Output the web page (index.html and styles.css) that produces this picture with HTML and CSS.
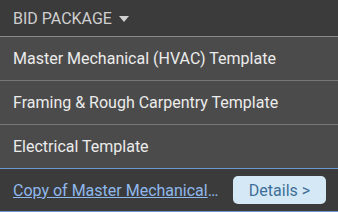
FILE: index.html
```html
<!DOCTYPE html>
<html>
<head>
<meta charset="utf-8">
<link rel="stylesheet" href="styles.css">
</head>
<body>
<div class="panel">
  <div class="header">
    <span class="header-title">BID PACKAGE</span>
    <svg class="caret" width="10" height="6" viewBox="0 0 10 6"><path d="M0 0 L10 0 L5 6 Z" fill="#d0d0d0"/></svg>
  </div>
  <div class="row">Master Mechanical (HVAC) Template</div>
  <div class="row">Framing &amp; Rough Carpentry Template</div>
  <div class="row last">Electrical Template</div>
  <div class="selected">
    <a class="link" href="#">Copy of Master Mechanical (HVAC) Template</a>
    <button class="details">Details &gt;</button>
  </div>
</div>
</body>
</html>
```
FILE: styles.css
```css
html, body {
  margin: 0;
  padding: 0;
  background: #3b3b3b;
}
.panel {
  width: 338px;
  height: 212px;
  font-family: Roboto, "Liberation Sans", sans-serif;
  background: #4b4b4b;
  overflow: hidden;
}
.header {
  height: 36px;
  background: #3b3b3b;
  border-bottom: 1px solid #8a8a8a;
  display: flex;
  align-items: center;
  padding-left: 13px;
  gap: 7px;
}
.header-title {
  color: #cfcfcf;
  font-size: 16px;
}
.caret {
  margin-top: 1px;
}
.row {
  height: 43px;
  border-bottom: 1px solid #777;
  display: flex;
  align-items: center;
  padding-left: 13px;
  color: #ececec;
  font-size: 16px;
}
.row.last {
  border-bottom: none;
}
.selected {
  height: 42px;
  background: #3b3b3b;
  border-top: 1px solid #6f97d2;
  border-bottom: 1px solid #6f97d2;
  display: flex;
  align-items: center;
  padding: 0 12px 0 13px;
  gap: 13px;
}
.link {
  flex: 1;
  min-width: 0;
  color: #8fb8ec;
  font-size: 16px;
  white-space: nowrap;
  overflow: hidden;
  text-overflow: ellipsis;
  text-decoration: underline;
}
.details {
  width: 93px;
  height: 28px;
  border: none;
  border-radius: 5px;
  background: #d5e8f6;
  color: #3e6f98;
  font-family: Roboto, "Liberation Sans", sans-serif;
  font-size: 16px;
  padding: 0;
  flex-shrink: 0;
}
```
